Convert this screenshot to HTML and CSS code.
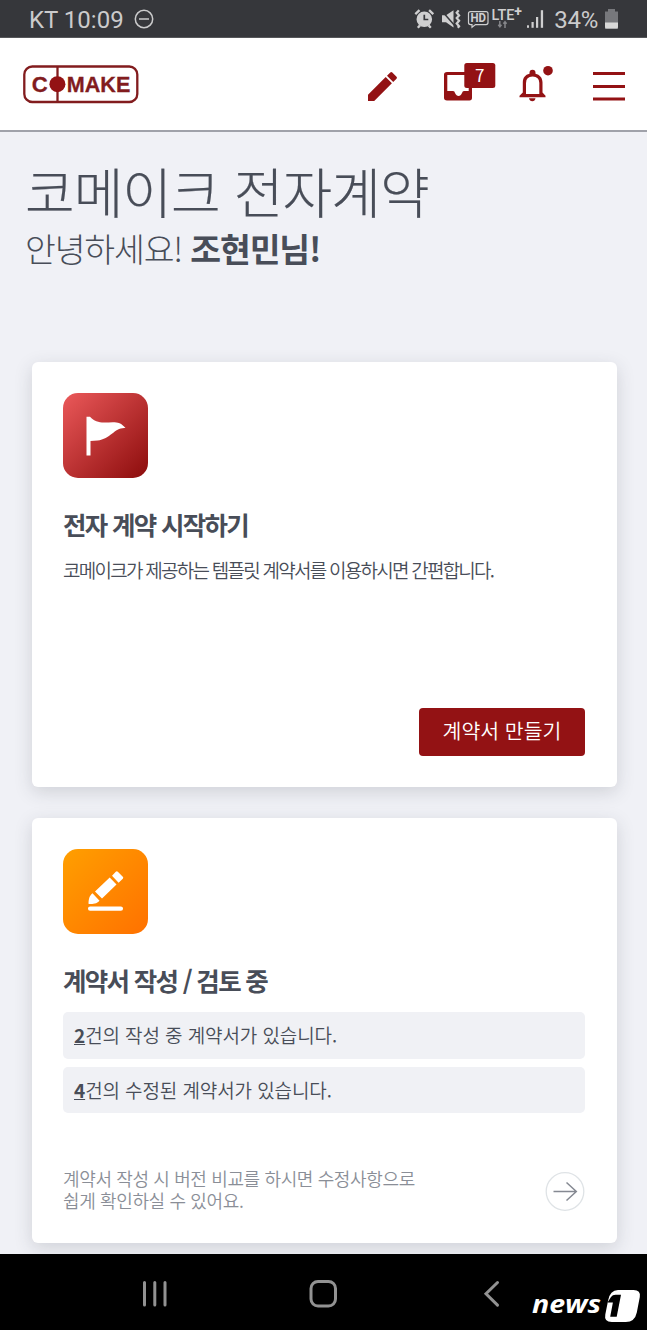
FILE: index.html
```
<!DOCTYPE html>
<html lang="ko">
<head>
<meta charset="utf-8">
<title>코메이크 전자계약</title>
<link rel="stylesheet" href="styles.css">
</head>
<body>
<div class="screen">
  <div class="status">
    <div class="status-left">
      <span class="status-text clock">KT 10:09</span>
      <svg class="dnd" width="20" height="20" viewBox="0 0 20 20"><circle cx="10" cy="10" r="8.7"/><path d="M5 10h10"/></svg>
    </div>
    <div class="status-right">
      <svg width="134" height="36" viewBox="414 1 134 36">
        <g fill="none" stroke="#cfcfd0">
          <circle cx="425.3" cy="19.3" r="6.6" fill="#cfcfd0" stroke-width="2.4"/>
          <path d="M416.3 14.2l4.2-4M434.3 14.2l-4.2-4M418.8 27.8l2.2-2.4M431.8 27.8l-2.2-2.4" stroke-width="2.3"/>
          <path d="M425.3 14.8v4.7h4" stroke="#36373b" stroke-width="1.7"/>
          <path d="M443 15.2h4l7.5-5v17.2l-7.500-5.200h-4z" fill="#cfcfd0" stroke="none"/>
          <path d="M442.500 10.500l14 16" stroke="#36373b" stroke-width="1.500"/>
          <path d="M459.700 10.400l-2 2.300 2.400 2.700-2.400 2.700 2.400 2.700-2.400 2.700 2.400 2.700-1.300 1.600" stroke-width="2.200"/>
          <path d="M471.500 11.600h15.500q2 0 2 2v9q0 2-2 2h-10.500l-3.500 2.700v-2.700h-1.500q-2 0-2-2v-9q0-2 2-2z" stroke-width="1.200"/>
          <path d="M500.800 21v6M499.300 24.800l1.600 2 1.600-2M506 28v-6M504.400 23.800l1.600-2 1.600 2" stroke="#85868a" stroke-width="1.500"/>
        </g>
        <g fill="#cfcfd0" font-family="Roboto, sans-serif">
          <text x="471.500" y="22.300" font-size="12" font-weight="700" textLength="15.500" lengthAdjust="spacingAndGlyphs">HD</text>
          <text x="492.500" y="20" font-size="15" font-weight="500" textLength="23" lengthAdjust="spacingAndGlyphs">LTE</text>
          <text x="515.300" y="16.300" font-size="14" font-weight="700">+</text>
          <rect x="528" y="25.300" width="2" height="2.500"/><rect x="532.500" y="22" width="2.200" height="5.800"/><rect x="537" y="17" width="2.200" height="10.800"/><rect x="541.800" y="10.200" width="2.300" height="17.600"/>
        </g>
      </svg>
      <span class="status-text battery-text">34%</span>
      <svg class="battery" width="13" height="20" viewBox="0 0 13 20"><path d="M3 0h7v2.500h3V20H0V2.500h3z" fill="#77787c"/><path d="M0 13.500h13V18q0 1.500-1.500 1.500h-10Q0 19.500 0 18z" fill="#d8d8d8"/></svg>
    </div>
  </div>

  <header class="header">
    <svg class="logo" width="116" height="39" viewBox="0 0 116 39">
      <rect x="1.300" y="1.500" width="113" height="35.500" rx="8" fill="none" stroke="#821c1e" stroke-width="2.300"/>
      <path d="M34.500 1v36" stroke="#821c1e" stroke-width="2.300"/>
      <circle cx="34.400" cy="19.200" r="8" fill="#931214"/>
      <g fill="#821c1e" stroke="#821c1e" stroke-width=".3" font-family="'Liberation Sans', Arial, sans-serif" font-weight="700" font-size="22">
        <text x="8.700" y="26.900" textLength="16" lengthAdjust="spacingAndGlyphs">C</text>
        <text x="43.800" y="26.900" textLength="63.500" lengthAdjust="spacingAndGlyphs">MAKE</text>
      </g>
    </svg>
    <svg class="tools" width="260" height="44" viewBox="366 62 260 44">
      <g fill="#931214">
        <path d="M368 101v-6.200l17.700-17.700 6.200 6.200L374.200 101zM387 75.800l3.300-3.300q1-1 2 0l4.200 4.200q1 1 0 2l-3.300 3.300z"/>
        <path fill-rule="evenodd" d="M447 72h22.500q2.500 0 2.500 2.500v23.300q0 2.700-2.500 2.700H447q-3 0-3-2.700V74.500q0-2.500 3-2.500zM447.300 75v16h5.700q1.700 0 2 2c1.700 4 5.500 4 7 0q.5-2 2-2h4.700V75z"/>
        <rect x="464.300" y="63" width="31" height="25" rx="2.500"/>
        <path d="M519.500 97.200v-1.500l3.300-3.200V82.500c0-5 2.500-7.800 6.700-8.800v-1a3 3 0 0 1 6 0v1c4.200 1 7 3.800 7 8.800v10l3 3.200v1.500zM529 98.300h6.500q-.5 3-3.200 3t-3.300-3z"/>
        <path d="M526 94V83q0-6.500 6.600-6.500T539.300 83v11z" fill="#fff"/>
        <circle cx="548" cy="70.700" r="4.800"/>
        <path d="M593 72h32v3h-32zM593 84.900h32v3h-32zM593 97.500h32v3h-32z"/>
      </g>
      <text x="479.800" y="82" text-anchor="middle" fill="#fff" font-family="'Noto Sans CJK KR', sans-serif" font-size="17">7</text>
    </svg>
  </header>

  <main class="main">
    <h1 class="title">코메이크 전자계약</h1>
    <p class="greeting">안녕하세요! <strong class="user">조현민님!</strong></p>

    <section class="card">
      <svg class="card-icon" width="85" height="85" viewBox="0 0 85 85">
        <defs><linearGradient id="red" x1="0" y1="0" x2="1" y2="1"><stop offset="0" stop-color="#eb595a"/><stop offset="1" stop-color="#8c0c0c"/></linearGradient></defs>
        <rect width="85" height="85" rx="15" fill="url(#red)"/>
        <path d="M23.500 23.700h3.500c4 4.200 8.500 5.800 14 5.800 8 0 15.500-2.500 21.500 5.500-11-1-14.500 11-28 12.500l-7 .6V62.500h-4z" fill="#fff"/>
      </svg>
      <h2 class="card-title">전자 계약 시작하기</h2>
      <p class="desc">코메이크가 제공하는 템플릿 계약서를 이용하시면 간편합니다.</p>
      <button class="button">계약서 만들기</button>
    </section>

    <section class="card">
      <svg class="card-icon" width="85" height="85" viewBox="0 0 85 85">
        <defs><linearGradient id="orange" x1="0" y1="0" x2="1" y2="1"><stop offset="0" stop-color="#ff9f00"/><stop offset="1" stop-color="#ff7100"/></linearGradient></defs>
        <rect width="85" height="85" rx="15" fill="url(#orange)"/>
        <g fill="#fff">
          <path d="M25.500 54.500c.2-4 .7-7.500 4-10.200l7 7.500c-2.600 3.200-6.500 3.200-10 3.300q-1 0-1-.6zM32 42.400L46.700 28.600l6.800 7L39 49.500zM49 26.700l3.800-4q1-1 2 0l5 5q1 1 0 2l-4.200 4z"/>
          <rect x="25" y="57.500" width="35" height="4.300" rx="2.100"/>
        </g>
      </svg>
      <h2 class="card-title">계약서 작성 / 검토 중</h2>
      <ul class="list">
        <li class="item"><b class="count">2</b>건의 작성 중 계약서가 있습니다.</li>
        <li class="item"><b class="count">4</b>건의 수정된 계약서가 있습니다.</li>
      </ul>
      <div class="card-foot">
        <p class="hint"><span>계약서 작성 시 버전 비교를 하시면 수정사항으로</span><span>쉽게 확인하실 수 있어요.</span></p>
        <svg width="40" height="40" viewBox="0 0 40 40" fill="none"><circle cx="20" cy="19.500" r="18.800" stroke="#dfe3e6" stroke-width="1.300"/><path d="M8.500 19.500h23M21.500 10.500l9.800 9-9.800 9" stroke="#858992" stroke-width="1.500"/></svg>
      </div>
    </section>
  </main>

  <nav class="nav">
    <svg width="647" height="76" viewBox="0 1254 647 76">
      <g fill="none" stroke="#929292" stroke-width="3" stroke-linecap="round">
        <path d="M144.500 1282.500v22.500M154.800 1282.500v22.500M165 1282.500v22.500"/>
        <rect x="311" y="1281.500" width="24.500" height="24.500" rx="7"/>
        <path d="M497.500 1282.500L486 1293.800l11.500 11.300"/>
      </g>
      <text class="brand" x="532" y="1313.300" textLength="69" lengthAdjust="spacingAndGlyphs">news</text>
      <path d="M618 1290h15.500q7.500 0 6.300 7l-3 15.500q-2 9.500-11 9.500h-14q-8 0-6.500-7.500l2.800-14Q610 1290 618 1290z" fill="#fff"/>
      <path d="M607.500 1302.500l3.500-5.500q1.500-2.200 4.500-2.200h5.500l-4.300 22h-6.500l2.700-14.300z" fill="#000"/>
    </svg>
  </nav>
</div>
</body>
</html>
```
FILE: styles.css
```
* { box-sizing: border-box; }
body { margin: 0; font-family: "Noto Sans CJK KR", sans-serif; color: #484d58; background: #f0f1f6; }
h1, h2, p, ul { margin: 0; padding: 0; }
.screen { width: 647px; height: 1330px; display: flex; flex-direction: column; overflow: hidden; }
.status { flex: none; height: 38px; background: #36373b; border-bottom: 1px solid #56575a; padding: 0 29px; display: flex; justify-content: space-between; align-items: center; }
.status-left, .status-right { display: flex; align-items: center; }
.status-left { gap: 10px; }
.status-right svg { flex: none; }
.status-text { font: 400 24px/28px Roboto, sans-serif; color: #cbcbcc; white-space: nowrap; padding-top: 3px; }
.battery-text { margin-left: 7px; letter-spacing: -.3px; }
.battery { margin-left: 7px; }
.dnd { fill: none; stroke: #cbcbcc; stroke-width: 1.500px; }
.header { flex: none; height: 94px; background: #fff; border-bottom: 2px solid #a0a2aa; padding: 0 21px 0 23px; display: flex; justify-content: space-between; }
.logo { margin-top: 27px; }
.tools { margin-top: 24px; }
.main { flex: none; height: 1122px; padding: 24px 30px 0 32px; display: flex; flex-direction: column; overflow: hidden; }
.title { flex: none; margin-left: -7px; font-size: 54px; line-height: 70px; font-weight: 300; letter-spacing: -1px; white-space: nowrap; -webkit-text-stroke: .2px; }
.greeting { flex: none; height: 136px; margin-left: -7px; font-size: 33.500px; line-height: 44px; font-weight: 300; letter-spacing: -1.150px; white-space: nowrap; }
.user { font-weight: 700; }
.card { flex: none; height: 425px; margin-bottom: 31px; padding: 31px 32px 31px 31px; background: #fff; border-radius: 6px; box-shadow: 0 5px 18px rgba(50, 55, 65, .17); display: flex; flex-direction: column; align-items: flex-start; }
.card-icon { flex: none; }
.card-title { margin-top: 28px; font-size: 25.500px; line-height: 36px; font-weight: 700; letter-spacing: -1.700px; white-space: nowrap; }
.desc { margin-top: 14px; font-size: 19px; line-height: 28px; font-weight: 350; letter-spacing: -1.750px; white-space: nowrap; }
.button { margin-top: auto; align-self: flex-end; width: 166px; height: 48px; padding: 0 0 4px; border: 0; border-radius: 4px; background: #931214; color: #fff; font: 350 20.500px/30px "Noto Sans CJK KR", sans-serif; white-space: nowrap; }
.list { align-self: stretch; margin-top: 14px; list-style: none; display: flex; flex-direction: column; gap: 8px; }
.item { height: 46.500px; padding-left: 11px; border-radius: 5px; background: #f0f1f5; font-size: 19px; font-weight: 350; letter-spacing: -.1px; line-height: 46px; white-space: nowrap; }
.count { text-decoration: underline; }
.card-foot { align-self: stretch; margin-top: auto; display: flex; justify-content: space-between; align-items: flex-end; }
.hint { display: flex; flex-direction: column; padding-bottom: 1px; font-size: 18px; font-weight: 350; line-height: 22px; letter-spacing: -.37px; color: #8a8e97; white-space: nowrap; }
.nav { flex: none; height: 76px; background: #000; }
.nav svg { display: block; }
.brand { font: italic 700 25px "Open Sans", sans-serif; fill: #fff; }
```
